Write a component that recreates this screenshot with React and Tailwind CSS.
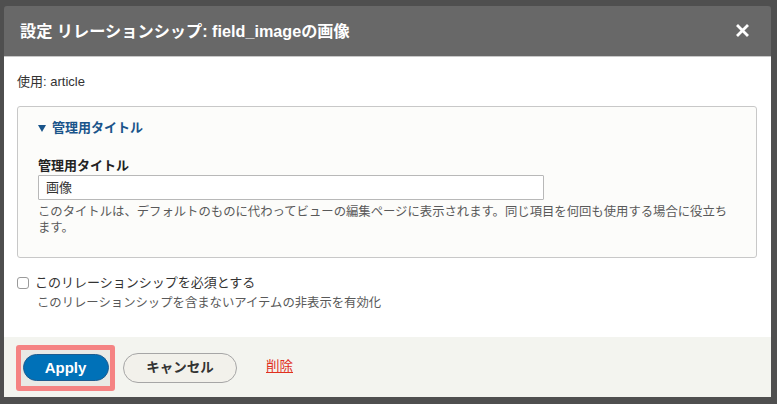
import React from 'react';

const font = { fontFamily: '"Liberation Sans", "Noto Sans CJK JP", sans-serif' };

const RelationshipDialog = () => {
    return (
        <div className="w-[777px] h-[404px] bg-[#4f4f4f] pt-[6px] pl-[4px] overflow-hidden" style={font}>
            <div className="w-[767px] h-[391px] flex flex-col rounded-t-[3px] overflow-hidden">
                {/* title bar */}
                <div className="h-[51px] shrink-0 bg-[#686868] border-b border-[#c8c8c8] flex items-center justify-between pl-[16px] pr-[22px]">
                    <h1 className="text-white font-bold text-[16.2px] leading-none">
                        設定 リレーションシップ: field_imageの画像
                    </h1>
                    <svg width="13" height="13" viewBox="0 0 13 13" className="mt-[-1px]">
                        <path d="M2 2 L11 11 M11 2 L2 11" stroke="white" strokeWidth="2.8" strokeLinecap="square" />
                    </svg>
                </div>

                {/* body */}
                <div className="flex-1 bg-white px-[13px] pr-[14px] pt-[16px]">
                    <p className="text-[13px] leading-[18px] text-[#333]">使用: article</p>

                    <div className="mt-[15px] border border-[#c8c8c8] rounded-[3px] bg-[#fcfcfa] pl-[20px] pr-[20px] pt-[12px] pb-[21px]">
                        <div className="text-[13px] leading-[18px] font-bold text-[#19548a] flex items-center">
                            <svg width="8" height="7" viewBox="0 0 8 7" className="mr-[6px]">
                                <path d="M0 0 H8 L4 7 Z" fill="#19548a" />
                            </svg>
                            管理用タイトル
                        </div>
                        <label className="block mt-[20px] text-[13px] leading-[18px] font-bold text-[#222]">管理用タイトル</label>
                        <div className="w-[506px] h-[25px] border border-[#b8b8b8] bg-white rounded-[1px] flex items-center pl-[7px] text-[13px] text-[#333]">
                            画像
                        </div>
                        <p className="mt-[4px] text-[12.35px] leading-[16px] text-[#595959]">
                            このタイトルは、デフォルトのものに代わってビューの編集ページに表示されます。同じ項目を何回も使用する場合に役立ちます。
                        </p>
                    </div>

                    <div className="mt-[16px] flex items-center h-[18px]">
                        <span className="w-[12px] h-[12px] border border-[#9a9a9a] rounded-[3px] bg-white mr-[6px]" />
                        <span className="text-[13px] leading-[18px] text-[#333]">このリレーションシップを必須とする</span>
                    </div>
                    <p className="mt-[3px] pl-[20px] text-[12.35px] leading-[16px] text-[#595959]">
                        このリレーションシップを含まないアイテムの非表示を有効化
                    </p>
                </div>

                {/* footer */}
                <div className="h-[60px] shrink-0 bg-[#f3f4ef] flex items-center pl-[12px]">
                    <div className="w-[99px] h-[46px] border-[5px] border-[#f58383] rounded-[3px] bg-[#e9e9e5] flex items-center justify-center mt-[1px]">
                        <button className="w-[86px] h-[27px] rounded-full bg-[#0071b8] border border-[#1e5c90] text-white font-bold text-[15px] leading-none">
                            Apply
                        </button>
                    </div>
                    <button className="ml-[8px] w-[114px] h-[30px] rounded-full bg-[#f2f1eb] border border-[#a6a6a6] text-[#333] font-bold text-[13.5px] leading-none mt-[2px]">
                        キャンセル
                    </button>
                    <a className="ml-[29px] text-[13.5px] text-[#e0301e] underline mt-[1px]">削除</a>
                </div>
            </div>
        </div>
    );
};

export default function App() {
    return <RelationshipDialog />;
}
